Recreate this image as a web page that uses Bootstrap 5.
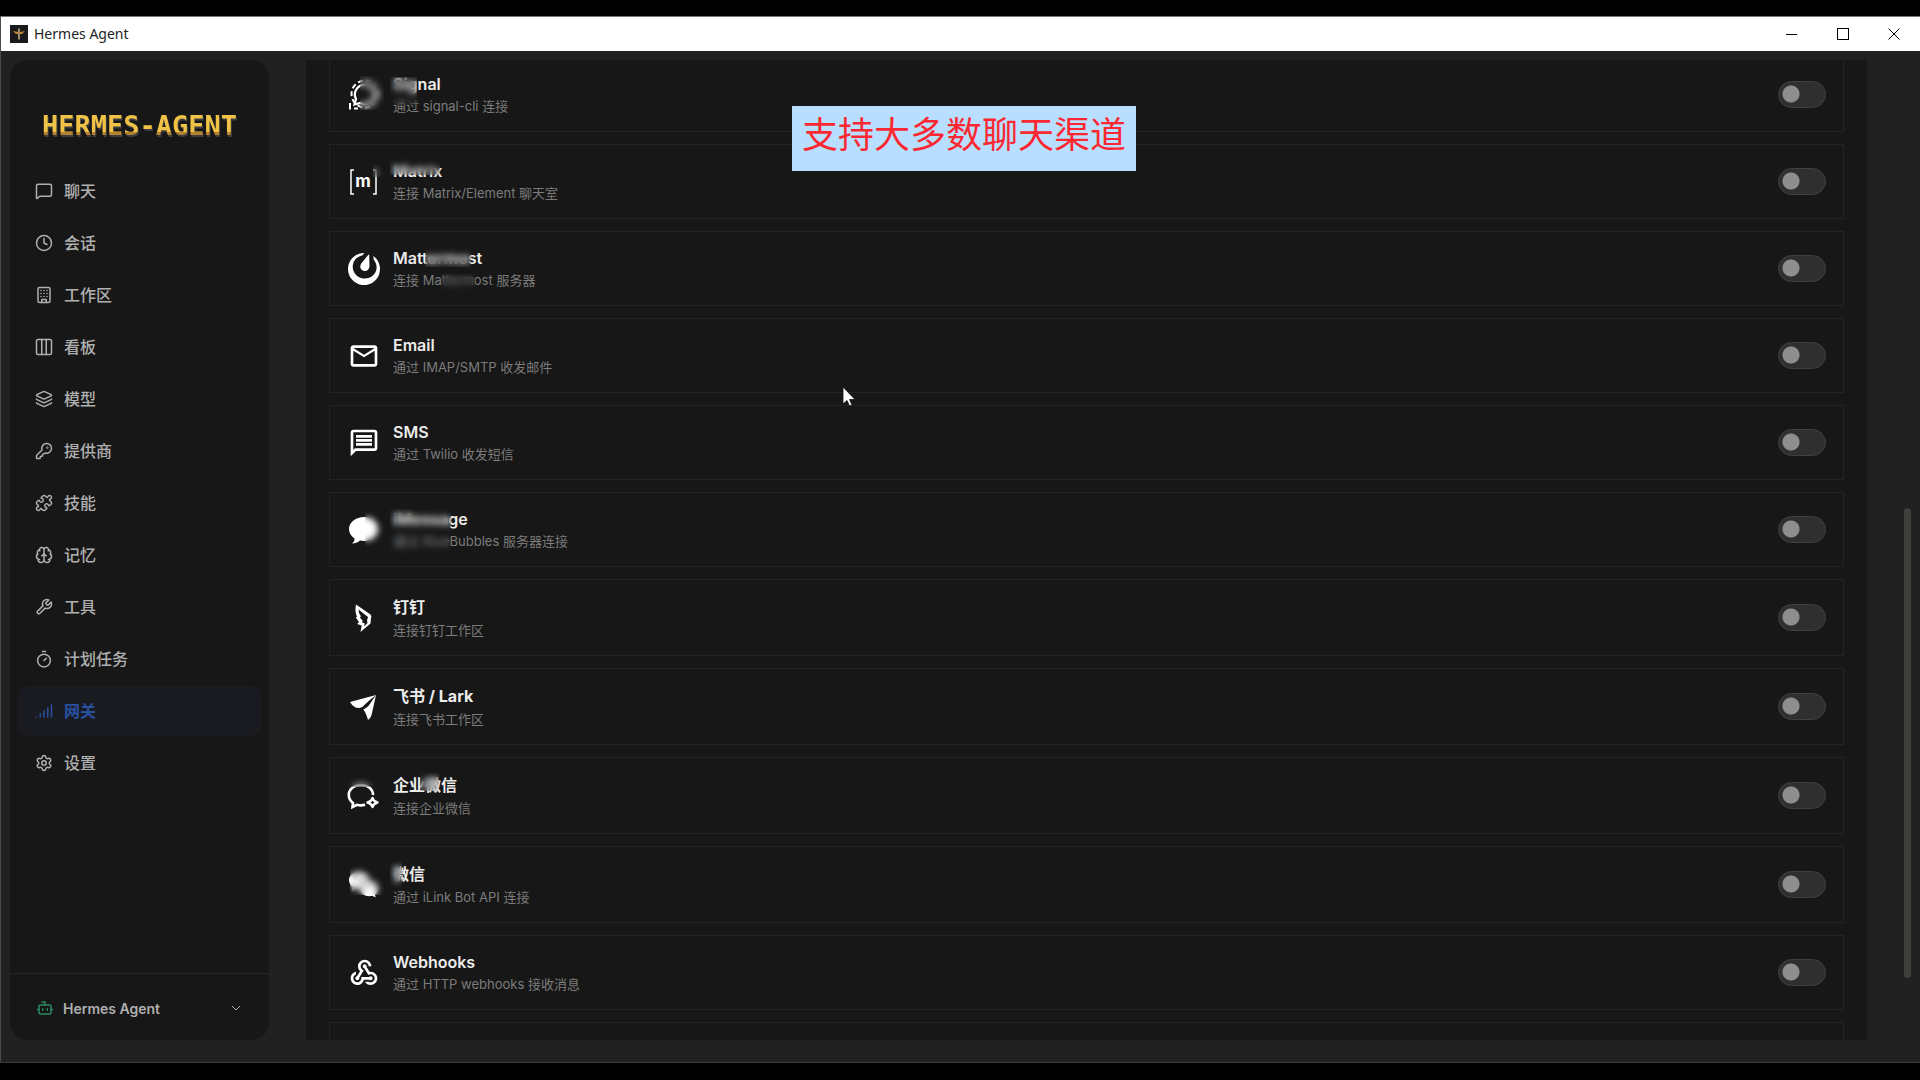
<!DOCTYPE html>
<html lang="zh-CN">
<head>
<meta charset="utf-8">
<meta name="viewport" content="width=device-width, initial-scale=1">
<title>Hermes Agent</title>
<link rel="stylesheet" href="https://cdn.jsdelivr.net/npm/bootstrap@5.3.0/dist/css/bootstrap.min.css">
<style>
  body { font-family: Inter, "Noto Sans CJK SC", sans-serif; background: #000; color: #b0b0b0; }
  .desktop { padding: 16px 0 17px; }
  .app-window { background: #212121; border-left: 1px solid #4a4a4a; border-top: 1px solid #777; border-bottom: 1px solid #3a3a3a; min-height: 0; }
  .titlebar { background: #fff; color: #222; height: 34px; padding: 0 1px 0 9px; gap: 6px; font: 14px/32px "Noto Sans", sans-serif; }
  .window-btn { width: 51px; height: 32px; border: 0; background: none; padding: 0; color: #000; }
  .app-body { padding: 9px 53px 22px 9px; gap: 37px; min-height: 0; }
  .sidebar { width: 259px; background: #171717; border-radius: 18px; }
  .brand { padding: 50px 0 22px; font: bold 27px/32px "DejaVu Sans Mono", monospace; }
  .brand span { background: linear-gradient(#f0c347 0 70%, #b5832f 70%); background-clip: text; -webkit-background-clip: text; color: transparent; filter: drop-shadow(1px 2px 0 #3d3d40); }
  .side-nav { padding: 2px 8px; gap: 2px; }
  .side-nav .nav-link { height: 50px; padding: 0 17px; gap: 11px; border-radius: 10px; font-size: 16px; font-weight: 500; color: #b0b0b0; }
  .side-nav .nav-link.active { background: #1a1b20; color: #2850a0; font-weight: 700; }
  .line-icon { width: 18px; height: 18px; flex: none; fill: none; stroke: currentColor; stroke-width: 2; stroke-linecap: round; stroke-linejoin: round; }
  .profile-btn { height: 67px; padding: 2px 28px 0 26px; gap: 9px; border: 0; border-top: 1px solid #262626; background: none; font-size: 14px; font-weight: 600; color: #b0b0b0; text-align: left; }
  .profile-btn .bot { color: #2a8a63; }
  .channels { background: #171717; padding: 0 23px; gap: 12px; overflow: hidden; min-width: 0; }
  .channels > :first-child { margin-top: -3px; }
  .channel { position: relative; border: 1px solid #232323; padding: 14px 17px 14px 18px; gap: 13px; flex: none; }
  .channel-icon { width: 32px; height: 32px; flex: none; fill: #fff; overflow: visible; }
  .channel-name { display: block; font-size: 16px; line-height: 24px; font-weight: 600; color: #ececec; }
  .channel-cjk .channel-name { line-height: 26px; font-weight: 700; }
  .channel-desc { margin: 0; font-size: 13px; line-height: 21px; color: #7c7c7c; }
  .channel .form-switch { padding: 0; margin: 0; min-height: 0; }
  .form-switch .form-check-input { display: block; float: none; margin: 0; width: 48px; height: 27px; border: 1px solid #404040; border-radius: 14px; background: #2f2f2f radial-gradient(circle at 12px 12px, #8e8e8e 8px, transparent 9px) no-repeat; }
  .next-channel { height: 75px; }
  .scroll-thumb { position: absolute; right: 9px; top: 47%; width: 7px; height: 45%; border-radius: 4px; background: #403f3c; }
  .note { position: absolute; left: 792px; top: 106px; padding: 0 10px 7px; background: #b8dfff; color: #fb2832; font-size: 36px; line-height: 58px; }
  .pointer { position: absolute; left: 842px; top: 386px; width: 14px; height: 21px; }
  /* privacy smears over brand names */
  .smear { position: absolute; backdrop-filter: blur(3px); }
  .s-signal { left: 60px; top: 19px; width: 27px; height: 28px; }
  .s-signal-icon { left: 30px; top: 18px; width: 24px; height: 34px; }
  .s-matrix { left: 60px; top: 12px; width: 50px; height: 18px; }
  .s-matrix-icon { left: 43px; top: 18px; width: 12px; height: 14px; }
  .s-matter { left: 95px; top: 16px; width: 46px; height: 19px; }
  .s-matter-desc { left: 111px; top: 42px; width: 34px; height: 18px; }
  .s-imsg { left: 60px; top: 16px; width: 61px; height: 46px; }
  .s-imsg-icon { left: 35px; top: 16px; width: 20px; height: 38px; }
  .s-wecom { left: 90px; top: 14px; width: 19px; height: 19px; }
  .s-wecom-icon { left: 16px; top: 18px; width: 32px; height: 11px; }
  .s-wechat { left: 60px; top: 14px; width: 12px; height: 28px; }
  .s-wechat-icon { left: 20px; top: 18px; width: 34px; height: 30px; }
</style>
<script src="https://cdn.jsdelivr.net/npm/bootstrap@5.3.0/dist/js/bootstrap.bundle.min.js"></script>
</head>
<body>
<div class="desktop vh-100 d-flex flex-column overflow-hidden">
 <div class="app-window position-relative flex-grow-1 d-flex flex-column">
  <header class="titlebar d-flex align-items-center flex-shrink-0">
    <svg width="18" height="18" viewBox="0 0 18 18" aria-hidden="true"><rect width="18" height="18" fill="#1a1a1c"/><path d="M3 6l5 1V4h2v3l5-1-3 3H10v5H8V9H6z" fill="#c08a35"/><path d="M9 3v12" stroke="#8a8f94"/></svg>
    <span class="flex-grow-1">Hermes Agent</span>
    <div class="d-flex">
      <button class="window-btn" aria-label="最小化"><svg width="12" height="12" class="d-block mx-auto"><path d="M0 6.500h11" stroke="currentColor"/></svg></button>
      <button class="window-btn" aria-label="最大化"><svg width="12" height="12" class="d-block mx-auto"><rect x=".5" y=".5" width="11" height="11" fill="none" stroke="currentColor"/></svg></button>
      <button class="window-btn" aria-label="关闭"><svg width="12" height="12" class="d-block mx-auto"><path d="M.5 .5l11 11M11.500 .5l-11 11" stroke="currentColor"/></svg></button>
    </div>
  </header>
  <div class="app-body flex-grow-1 d-flex">
    <aside class="sidebar flex-shrink-0 d-flex flex-column">
      <div class="brand text-center"><span>HERMES-AGENT</span></div>
      <nav class="side-nav nav flex-column flex-nowrap flex-grow-1">
        <a href="#" class="nav-link d-flex align-items-center"><svg class="line-icon" viewBox="0 0 24 24"><path d="M22 17a2 2 0 0 1-2 2H6.828a2 2 0 0 0-1.414.586l-2.202 2.202A.71.71 0 0 1 2 21.286V5a2 2 0 0 1 2-2h16a2 2 0 0 1 2 2z"/></svg>聊天</a>
        <a href="#" class="nav-link d-flex align-items-center"><svg class="line-icon" viewBox="0 0 24 24"><circle cx="12" cy="12" r="10"/><path d="M12 6v6l4 2"/></svg>会话</a>
        <a href="#" class="nav-link d-flex align-items-center"><svg class="line-icon" viewBox="0 0 24 24"><rect x="4" y="2" width="16" height="20" rx="2"/><path d="M9 22v-4h6v4M8 6h.01M16 6h.01M12 6h.01M12 10h.01M12 14h.01M16 10h.01M16 14h.01M8 10h.01M8 14h.01"/></svg>工作区</a>
        <a href="#" class="nav-link d-flex align-items-center"><svg class="line-icon" viewBox="0 0 24 24"><rect x="2" y="2" width="20" height="20" rx="2"/><path d="M9 2v20M15 2v20"/></svg>看板</a>
        <a href="#" class="nav-link d-flex align-items-center"><svg class="line-icon" viewBox="0 0 24 24"><path d="M12.830 2.180a2 2 0 0 0-1.660 0L2.600 6.080a1 1 0 0 0 0 1.830l8.580 3.910a2 2 0 0 0 1.660 0l8.580-3.900a1 1 0 0 0 0-1.830zM2 12a1 1 0 0 0 .58.91l8.600 3.910a2 2 0 0 0 1.650 0l8.580-3.900A1 1 0 0 0 22 12M2 17a1 1 0 0 0 .58.91l8.600 3.910a2 2 0 0 0 1.650 0l8.580-3.900A1 1 0 0 0 22 17"/></svg>模型</a>
        <a href="#" class="nav-link d-flex align-items-center"><svg class="line-icon" viewBox="0 0 24 24"><path d="M2.586 17.414A2 2 0 0 0 2 18.828V21a1 1 0 0 0 1 1h3a1 1 0 0 0 1-1v-1a1 1 0 0 1 1-1h1a1 1 0 0 0 1-1v-1a1 1 0 0 1 1-1h.172a2 2 0 0 0 1.414-.586l.814-.814a6.500 6.500 0 1 0-4-4z"/><circle cx="16.500" cy="7.500" r=".5"/></svg>提供商</a>
        <a href="#" class="nav-link d-flex align-items-center"><svg class="line-icon" viewBox="0 0 24 24"><path d="M15.390 4.390a1 1 0 0 0 1.680-.474 2.500 2.500 0 1 1 3.014 3.015 1 1 0 0 0-.474 1.680l1.683 1.682a2.414 2.414 0 0 1 0 3.414L19.610 15.390a1 1 0 0 1-1.680-.474 2.500 2.500 0 1 0-3.014 3.015 1 1 0 0 1 .474 1.680l-1.683 1.682a2.414 2.414 0 0 1-3.414 0L8.610 19.610a1 1 0 0 0-1.680.474 2.500 2.500 0 1 1-3.014-3.015 1 1 0 0 0 .474-1.680l-1.683-1.682a2.414 2.414 0 0 1 0-3.414L4.390 8.610a1 1 0 0 1 1.680.474 2.500 2.500 0 1 0 3.014-3.015 1 1 0 0 1-.474-1.680l1.683-1.682a2.414 2.414 0 0 1 3.414 0z"/></svg>技能</a>
        <a href="#" class="nav-link d-flex align-items-center"><svg class="line-icon" viewBox="0 0 24 24"><path d="M12 18V5M15 13a4.170 4.170 0 0 1-3-4 4.170 4.170 0 0 1-3 4M17.598 6.500A3 3 0 1 0 12 5a3 3 0 1 0-5.598 1.500M17.997 5.125a4 4 0 0 1 2.526 5.770M18 18a4 4 0 0 0 2-7.464M19.967 17.483A4 4 0 1 1 12 18a4 4 0 1 1-7.967-.517M6 18a4 4 0 0 1-2-7.464M6.003 5.125a4 4 0 0 0-2.526 5.770"/></svg>记忆</a>
        <a href="#" class="nav-link d-flex align-items-center"><svg class="line-icon" viewBox="0 0 24 24"><path d="M14.700 6.300a1 1 0 0 0 0 1.400l1.600 1.600a1 1 0 0 0 1.400 0l3.770-3.770a6 6 0 0 1-7.940 7.940l-6.910 6.910a2.120 2.120 0 0 1-3-3l6.910-6.910a6 6 0 0 1 7.940-7.940l-3.760 3.760z"/></svg>工具</a>
        <a href="#" class="nav-link d-flex align-items-center"><svg class="line-icon" viewBox="0 0 24 24"><path d="M10 2h4M12 14l3-3"/><circle cx="12" cy="14" r="8.500"/></svg>计划任务</a>
        <a href="#" class="nav-link active d-flex align-items-center" aria-current="page"><svg class="line-icon" viewBox="0 0 24 24"><path d="M2 20h.01M7 20v-4M12 20v-8M17 20V8M22 4v16"/></svg>网关</a>
        <a href="#" class="nav-link d-flex align-items-center"><svg class="line-icon" viewBox="0 0 24 24"><path d="M9.671 4.136a2.340 2.340 0 0 1 4.659 0 2.340 2.340 0 0 0 3.319 1.915 2.340 2.340 0 0 1 2.330 4.033 2.340 2.340 0 0 0 0 3.831 2.340 2.340 0 0 1-2.330 4.033 2.340 2.340 0 0 0-3.319 1.915 2.340 2.340 0 0 1-4.659 0 2.340 2.340 0 0 0-3.320-1.915 2.340 2.340 0 0 1-2.330-4.033 2.340 2.340 0 0 0 0-3.831A2.340 2.340 0 0 1 6.350 6.051a2.340 2.340 0 0 0 3.319-1.915"/><circle cx="12" cy="12" r="3"/></svg>设置</a>
      </nav>
      <button class="profile-btn d-flex align-items-center w-100">
        <svg class="line-icon bot" viewBox="0 0 24 24"><path d="M12 8V4H8"/><rect x="4" y="8" width="16" height="12" rx="2"/><path d="M2 14h2M20 14h2M15 13v2M9 13v2"/></svg>
        <span class="flex-grow-1">Hermes Agent</span>
        <svg width="10" height="6" viewBox="0 0 10 6" fill="none" stroke="currentColor"><path d="M1 1l4 4 4-4"/></svg>
      </button>
    </aside>

    <main class="channels flex-grow-1 d-flex flex-column">
      <section class="channel d-flex align-items-center">
        <svg class="channel-icon" viewBox="0 0 32 32"><circle cx="17" cy="15" r="13.500" fill="none" stroke="#fff" stroke-width="2" stroke-dasharray="5 3"/><path d="M2 24v5.500h1M6 29.500h4" fill="none" stroke="#fff" stroke-width="2"/><path d="M17 6a9.500 9.500 0 1 1-4.500 18L6.500 25.500 8 20A9.500 9.500 0 0 1 17 6z" fill="none" stroke="#fff" stroke-width="2.200"/></svg>
        <div class="flex-grow-1"><label class="channel-name" for="c1">Signal</label><p class="channel-desc">通过 signal-cli 连接</p></div>
        <div class="form-check form-switch"><input class="form-check-input" type="checkbox" role="switch" id="c1"></div>
        <i class="smear s-signal"></i><i class="smear s-signal-icon"></i>
      </section>
      <section class="channel d-flex align-items-center">
        <svg class="channel-icon" viewBox="0 0 32 32"><path d="M6 4H3v24h3M25 4h3v24h-3" fill="none" stroke="#fff" stroke-width="1.500"/><text x="15" y="21" text-anchor="middle" font-family="Inter" font-weight="700" font-size="17">m</text></svg>
        <div class="flex-grow-1"><label class="channel-name" for="c2">Matrix</label><p class="channel-desc">连接 Matrix/Element 聊天室</p></div>
        <div class="form-check form-switch"><input class="form-check-input" type="checkbox" role="switch" id="c2"></div>
        <i class="smear s-matrix"></i><i class="smear s-matrix-icon"></i>
      </section>
      <section class="channel d-flex align-items-center">
        <svg class="channel-icon" viewBox="0 0 24 24"><path d="M12.081 0C7.048-.034 2.339 3.125.637 8.153c-2.125 6.276 1.240 13.086 7.516 15.210 6.276 2.125 13.086-1.240 15.210-7.516 1.727-5.100-.172-10.552-4.311-13.557l.126 2.547c2.065 2.282 2.880 5.512 1.852 8.549-1.534 4.532-6.594 6.915-11.300 5.321-4.708-1.593-7.280-6.559-5.745-11.092 1.031-3.046 3.655-5.121 6.694-5.670l1.642-1.940A4.870 4.870 0 0 0 12.080 0zm3.400 1.100L13.600 3.400l-3.532 4.361s-1.024 1.278-.798 2.851c.226 1.574 1.396 2.340 2.304 2.648.907.307 2.302.408 3.438-.704 1.135-1.112 1.098-2.750 1.098-2.750l-.204-8.442a.284.284 0 0 0-.425-.264z"/></svg>
        <div class="flex-grow-1"><label class="channel-name" for="c3">Mattermost</label><p class="channel-desc">连接 Mattermost 服务器</p></div>
        <div class="form-check form-switch"><input class="form-check-input" type="checkbox" role="switch" id="c3"></div>
        <i class="smear s-matter"></i><i class="smear s-matter-desc"></i>
      </section>
      <section class="channel d-flex align-items-center">
        <svg class="channel-icon" viewBox="0 0 24 24"><path d="M22 6c0-1.100-.9-2-2-2H4c-1.100 0-2 .9-2 2v12c0 1.100.9 2 2 2h16c1.100 0 2-.9 2-2V6zm-2 0-8 5-8-5h16zm0 12H4V8l8 5 8-5v10z"/></svg>
        <div class="flex-grow-1"><label class="channel-name" for="c4">Email</label><p class="channel-desc">通过 IMAP/SMTP 收发邮件</p></div>
        <div class="form-check form-switch"><input class="form-check-input" type="checkbox" role="switch" id="c4"></div>
      </section>
      <section class="channel d-flex align-items-center">
        <svg class="channel-icon" viewBox="0 0 24 24"><path d="M4 4h16v12H5.170L4 17.170V4m0-2c-1.100 0-1.990.9-1.990 2L2 22l4-4h14c1.100 0 2-.9 2-2V4c0-1.100-.9-2-2-2H4zm2 10h12v2H6v-2zm0-3h12v2H6V9zm0-3h12v2H6V6z"/></svg>
        <div class="flex-grow-1"><label class="channel-name" for="c5">SMS</label><p class="channel-desc">通过 Twilio 收发短信</p></div>
        <div class="form-check form-switch"><input class="form-check-input" type="checkbox" role="switch" id="c5"></div>
      </section>
      <section class="channel d-flex align-items-center">
        <svg class="channel-icon" viewBox="0 0 32 32"><path d="M16 3c8 0 14 5 14 12s-6 12-14 12c-1.500 0-2.500-.2-4-.5-2 2-5 3-8 3 2-1.500 2.500-3 2.500-5C3 22 1 19 1 15 1 8 8 3 16 3z"/></svg>
        <div class="flex-grow-1"><label class="channel-name" for="c6">iMessage</label><p class="channel-desc">通过 BlueBubbles 服务器连接</p></div>
        <div class="form-check form-switch"><input class="form-check-input" type="checkbox" role="switch" id="c6"></div>
        <i class="smear s-imsg"></i><i class="smear s-imsg-icon"></i>
      </section>
      <section class="channel channel-cjk d-flex align-items-center">
        <svg class="channel-icon" viewBox="0 0 32 32"><path d="M8 2.500L22.500 12.500q1.500 1.500 .5 3.500l-.5 5.500L12.500 30l1.200-6.500-4.500-1.500 1.800-2-3.200-4.500 1.200-.8Q6.500 9 8 2.500zM10.500 7.500q0 4 2.500 7l-1.200 .8 3 3.700-1 1.300 3 1.200-.8 3 3.500-3.500-.5-2.500 1-3.500z" fill-rule="evenodd"/></svg>
        <div class="flex-grow-1"><label class="channel-name" for="c7">钉钉</label><p class="channel-desc">连接钉钉工作区</p></div>
        <div class="form-check form-switch"><input class="form-check-input" type="checkbox" role="switch" id="c7"></div>
      </section>
      <section class="channel channel-cjk d-flex align-items-center">
        <svg class="channel-icon" viewBox="0 0 32 32"><path d="M28 4L2 11c1.500 2.500 3 4 5.500 5.500 2.500.8 5 .6 7-.8l6.500-6z"/><path d="M28 4l-5.500 8c-1.500 3-4 5-7.200 6.500 2.500 3 3.500 6.500 4.700 10.500 2.500-2 3.500-4 4-7z"/></svg>
        <div class="flex-grow-1"><label class="channel-name" for="c8">飞书 / Lark</label><p class="channel-desc">连接飞书工作区</p></div>
        <div class="form-check form-switch"><input class="form-check-input" type="checkbox" role="switch" id="c8"></div>
      </section>
      <section class="channel channel-cjk d-flex align-items-center">
        <svg class="channel-icon" viewBox="0 0 32 32"><path d="M25 15c0-6-5-10-12-10S.8 9 .8 15c0 3.500 1.700 6 4.200 8l-.5 4 4.500-2.200c3 .8 6 .6 8-.3" fill="none" stroke="#fff" stroke-width="2.600"/><path d="M24.500 18q1 3.500 5 4.500-4 1-5 4.500-1-3.500-5-4.500 4-1 5-4.500z" fill="none" stroke="#fff" stroke-width="2.400" stroke-linejoin="round"/></svg>
        <div class="flex-grow-1"><label class="channel-name" for="c9">企业微信</label><p class="channel-desc">连接企业微信</p></div>
        <div class="form-check form-switch"><input class="form-check-input" type="checkbox" role="switch" id="c9"></div>
        <i class="smear s-wecom"></i><i class="smear s-wecom-icon"></i>
      </section>
      <section class="channel channel-cjk d-flex align-items-center">
        <svg class="channel-icon" viewBox="0 0 32 32"><path d="M11 3c6 0 10 4 10 8-6 0-10 4-9 9-1 .2-3 0-4-.4L4 22l1-4c-2.500-1.500-4-4-4-7 0-4.500 4.500-8 10-8z"/><path d="M21 12c5 0 9 3.500 9 7.500 0 2.500-1.200 4.500-3 6l.6 3-3.300-1.700c-6 1.700-12-1.800-12-7.300 0-4 4-7.500 8.700-7.500z"/><g fill="#171717"><circle cx="8" cy="9" r="1.300"/><circle cx="14" cy="9" r="1.300"/><circle cx="18" cy="17.500" r="1.200"/><circle cx="24" cy="17.500" r="1.200"/></g></svg>
        <div class="flex-grow-1"><label class="channel-name" for="c10">微信</label><p class="channel-desc">通过 iLink Bot API 连接</p></div>
        <div class="form-check form-switch"><input class="form-check-input" type="checkbox" role="switch" id="c10"></div>
        <i class="smear s-wechat"></i><i class="smear s-wechat-icon"></i>
      </section>
      <section class="channel d-flex align-items-center">
        <svg class="channel-icon" viewBox="0 0 24 24"><path d="M10 15h5.880c.27-.31.67-.5 1.120-.5.83 0 1.500.67 1.500 1.500s-.67 1.500-1.500 1.500c-.44 0-.84-.19-1.120-.5H11.900c-.46 2.280-2.480 4-4.900 4-2.760 0-5-2.240-5-5 0-2.420 1.720-4.440 4-4.900v2.070C4.840 13.580 4 14.700 4 16c0 1.650 1.350 3 3 3s3-1.350 3-3v-1zm2.500-11c1.650 0 3 1.350 3 3h2c0-2.760-2.240-5-5-5s-5 2.240-5 5c0 1.430.6 2.710 1.550 3.620l-2.350 3.900c-.68.14-1.200.75-1.200 1.480 0 .83.67 1.500 1.500 1.500s1.500-.67 1.500-1.500c0-.16-.02-.31-.07-.45l3.380-5.630C10.490 9.610 9.500 8.420 9.500 7c0-1.650 1.350-3 3-3zm4.500 9c-.64 0-1.230.2-1.720.54l-3.050-5.070C11.530 8.350 11 7.740 11 7c0-.83.67-1.500 1.500-1.500S14 6.170 14 7c0 .15-.02.29-.06.43l2.190 3.650c.28-.05.57-.08.87-.08 2.760 0 5 2.240 5 5s-2.240 5-5 5c-1.850 0-3.470-1.010-4.330-2.500h2.670c.48.32 1.050.5 1.660.5 1.650 0 3-1.350 3-3s-1.350-3-3-3z"/></svg>
        <div class="flex-grow-1"><label class="channel-name" for="c11">Webhooks</label><p class="channel-desc">通过 HTTP webhooks 接收消息</p></div>
        <div class="form-check form-switch"><input class="form-check-input" type="checkbox" role="switch" id="c11"></div>
      </section>
      <section class="channel next-channel"></section>
    </main>
  </div>
  <div class="scroll-thumb"></div>
 </div>
</div>
<div class="note">支持大多数聊天渠道</div>
<svg class="pointer" viewBox="0 0 14 21" aria-hidden="true"><path d="M1 1v17l4-3.500L7.500 20l2.500-1-2.500-5.500H13z" fill="#fff" stroke="#111" stroke-width=".8"/></svg>
</body>
</html>
